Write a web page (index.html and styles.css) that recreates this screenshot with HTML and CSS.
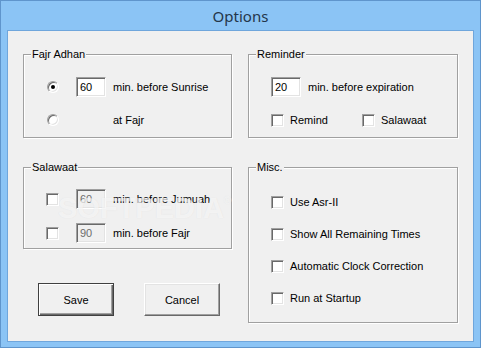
FILE: index.html
```html
<!DOCTYPE html>
<html>
<head>
<meta charset="utf-8">
<link rel="stylesheet" href="styles.css">
</head>
<body>
<div class="window">
  <div class="titlebar">Options</div>
  <div class="client">
    <div class="col col-left">
      <div class="group fajr">
        <span class="legend">Fajr Adhan</span>
        <div class="grid3">
          <span class="radio checked"></span>
          <span class="textbox">60</span>
          <span class="label">min. before Sunrise</span>
          <span class="radio"></span>
          <span></span>
          <span class="label">at Fajr</span>
        </div>
      </div>
      <div class="group salawaat">
        <span class="legend">Salawaat</span>
        <div class="grid3 grid3-sal">
          <span class="check"></span>
          <span class="textbox disabled">60</span>
          <span class="label">min. before Jumuah</span>
          <span class="check"></span>
          <span class="textbox disabled">90</span>
          <span class="label">min. before Fajr</span>
        </div>
      </div>
      <div class="buttons">
        <div class="button default">Save</div>
        <div class="button">Cancel</div>
      </div>
    </div>
    <div class="col col-right">
      <div class="group reminder">
        <span class="legend">Reminder</span>
        <div class="row">
          <span class="textbox">20</span>
          <span class="label">min. before expiration</span>
        </div>
        <div class="row row2">
          <div class="checkitem wide"><span class="check"></span><span class="label">Remind</span></div>
          <div class="checkitem"><span class="check"></span><span class="label">Salawaat</span></div>
        </div>
      </div>
      <div class="group misc">
        <span class="legend">Misc.</span>
        <div class="checklist">
          <div class="checkitem"><span class="check"></span><span class="label">Use Asr-II</span></div>
          <div class="checkitem"><span class="check"></span><span class="label">Show All Remaining Times</span></div>
          <div class="checkitem"><span class="check"></span><span class="label">Automatic Clock Correction</span></div>
          <div class="checkitem"><span class="check"></span><span class="label">Run at Startup</span></div>
        </div>
      </div>
    </div>
    <div class="watermark">SOFTPEDIA<sup>®</sup></div>
  </div>
</div>
</body>
</html>
```

FILE: styles.css
```css
* { box-sizing: border-box; }
html, body { margin: 0; padding: 0; }
body {
  width: 481px;
  height: 348px;
  font-family: "Liberation Sans", Arial, sans-serif;
  font-size: 11px;
  color: #000;
  overflow: hidden;
}
.window {
  width: 481px;
  height: 348px;
  background: #8bc4f5;
  border: 1px solid #5f95cc;
  padding: 0 6px 5px 6px;
  display: flex;
  flex-direction: column;
}
.titlebar {
  height: 29px;
  flex: none;
  text-align: center;
  font-family: "Noto Sans", "Open Sans", sans-serif;
  font-size: 15px;
  line-height: 29px;
  color: #24364a;
  padding-top: 1px;
}
.client {
  position: relative;
  flex: 1;
  background: #f0f0f0;
  border: 1px solid #6fa6dc;
  display: flex;
  gap: 16px;
  padding: 23px 0 0 15px;
}
.col { display: flex; flex-direction: column; }
.col-left { width: 209px; }
.col-right { width: 210px; }

.group {
  position: relative;
  border: 1px solid #a0a0a0;
  box-shadow: 1px 1px 0 #fff, inset 1px 1px 0 #fff;
}
.legend {
  position: absolute;
  top: -7px;
  left: 7px;
  padding: 0 1px;
  background: #f0f0f0;
  line-height: 13px;
}
.fajr { height: 84px; padding: 22px 0 0 23px; }
.salawaat { height: 82px; margin-top: 29px; padding: 21px 0 0 22px; }
.reminder { height: 84px; padding: 22px 0 0 22px; }
.misc { height: 156px; margin-top: 29px; padding: 28px 0 0 22px; }

.grid3 {
  display: grid;
  grid-template-columns: 29px 37px auto;
  grid-auto-rows: 20px;
  row-gap: 13px;
  align-items: center;
}
.grid3-sal { grid-template-columns: 30px 37px auto; row-gap: 14px; }

.label { line-height: 13px; white-space: nowrap; }

.textbox {
  width: 30px;
  height: 20px;
  background: #fff;
  border: 1px solid;
  border-color: #a0a0a0 #fff #fff #a0a0a0;
  box-shadow: inset 1px 1px 0 #696969, inset -1px -1px 0 #e3e3e3;
  padding: 0 0 0 3px;
  line-height: 18px;
}
.textbox.disabled { background: #f0f0f0; color: #6d6d6d; }

.radio {
  position: relative;
  width: 12px;
  height: 12px;
  border-radius: 50%;
  background: #fff;
  border: 1px solid;
  border-color: #a0a0a0 #fff #fff #a0a0a0;
  box-shadow: inset 1px 1px 0 #696969, inset -1px -1px 0 #e3e3e3;
}
.radio.checked::after {
  content: "";
  position: absolute;
  left: 3px;
  top: 3px;
  width: 4px;
  height: 4px;
  border-radius: 50%;
  background: #000;
}

.check {
  width: 13px;
  height: 13px;
  background: #fff;
  border: 1px solid;
  border-color: #a0a0a0 #fff #fff #a0a0a0;
  box-shadow: inset 1px 1px 0 #696969, inset -1px -1px 0 #e3e3e3;
  flex: none;
}

.row { display: flex; align-items: center; height: 20px; }
.row .textbox { margin-right: 7px; }
.row2 { margin-top: 13px; }
.checkitem { display: flex; align-items: center; gap: 6px; }
.checkitem.wide { width: 91px; }
.checklist { display: flex; flex-direction: column; gap: 19px; }

.buttons {
  display: flex;
  gap: 30px;
  margin-top: 34px;
  padding-left: 15px;
}
.button {
  width: 76px;
  height: 33px;
  display: flex;
  align-items: center;
  justify-content: center;
  border: 1px solid;
  border-color: #fff #696969 #696969 #fff;
  box-shadow: inset -1px -1px 0 #a0a0a0, inset 1px 1px 0 #e3e3e3;
  background: #f0f0f0;
}
.button.default {
  border: 1px solid #404040;
  box-shadow: inset 1px 1px 0 #fff, inset -1px -1px 0 #696969, inset -2px -2px 0 #a0a0a0;
}

.watermark {
  position: absolute;
  left: 50px;
  top: 153px;
  font-family: "Liberation Sans", Arial, sans-serif;
  font-weight: bold;
  font-size: 29px;
  line-height: 34px;
  color: rgba(255, 255, 255, 0.6);
  text-shadow: 0 0 1px rgba(190, 190, 190, 0.3);
  pointer-events: none;
}
.watermark sup { font-size: 10px; font-weight: normal; vertical-align: 14px; }
```
